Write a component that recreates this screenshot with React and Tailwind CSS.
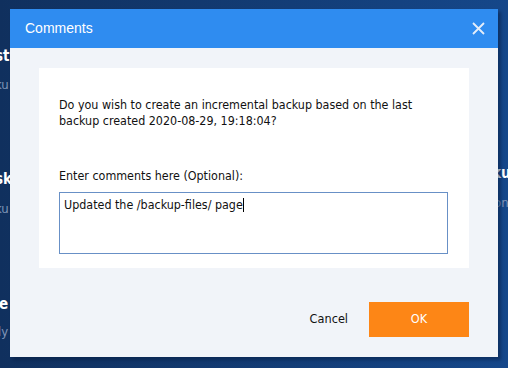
import React from 'react';

const font = { fontFamily: '"DejaVu Sans Condensed", "Liberation Sans", sans-serif' };

const CloseIcon = () => (
    <svg width="13" height="13" viewBox="0 0 13 13" fill="none">
        <path d="M1 1L12 12M12 1L1 12" stroke="#e4edf9" strokeWidth="1.8" />
    </svg>
);

const App = () => {
    return (
        <div
            className="relative w-[508px] h-[368px] overflow-hidden bg-gradient-to-r from-[#10305e] to-[#15478a] font-['Liberation_Sans',sans-serif]"
        >
            {/* page behind the dialog */}
            <div className="flex justify-between h-full" style={font}>
                <div className="flex flex-col w-[40px] pt-[47px] -ml-[5px]">
                    <span className="text-[15px] font-bold text-white leading-[18px]">st</span>
                    <span className="text-[13px] text-[#7f95b8] leading-[16px] mt-[12px]">ku</span>
                    <span className="text-[15px] font-bold text-white leading-[18px] mt-[77px]">sk</span>
                    <span className="text-[13px] text-[#7f95b8] leading-[16px] mt-[13px]">ku</span>
                    <span className="text-[15px] font-bold text-white leading-[18px] mt-[78px] ml-[4px]">e</span>
                    <span className="text-[13px] text-[#7f95b8] leading-[16px] mt-[11px] ml-[3px]">ly</span>
                </div>
                <div className="flex flex-col w-[14px] pt-[164px]">
                    <span className="text-[15px] font-bold text-white leading-[18px] -ml-[2px]">ku</span>
                    <span className="text-[13px] text-[#7f95b8] leading-[16px] mt-[13px]">on</span>
                </div>
            </div>

            {/* dialog */}
            <div className="absolute left-[10px] top-[9px] w-[488px] h-[348px] flex flex-col bg-[#f1f4f9] shadow-[3px_3px_3px_rgba(5,25,60,0.45)]">
                <div className="h-[39px] flex items-center justify-between bg-[#2f8cf0] pl-[15px] pr-[13px]">
                    <span className="text-[14px] text-white">Comments</span>
                    <CloseIcon />
                </div>
                <div className="px-[29px] pt-[20px]">
                    <div className="h-[200px] bg-white px-[20px] pt-[29px] text-[12.4px] leading-[16px] text-[#111]" style={font}>
                        <p>
                            Do you wish to create an incremental backup based on the last
                            <br />
                            backup created 2020-08-29, 19:18:04?
                        </p>
                        <p className="mt-[39px]">Enter comments here (Optional):</p>
                        <div className="mt-[8px] w-[389px] h-[62px] border border-[#6890c6] px-[4px] pt-[4px]">
                            <span>Updated the /backup-files/ page</span>
                            <span className="inline-block w-px h-[14px] bg-black align-[-3px]" />
                        </div>
                    </div>
                </div>
                <div className="flex items-center justify-end gap-[21px] pr-[29px] mt-[34px]" style={font}>
                    <span className="text-[12.6px] text-[#111]">Cancel</span>
                    <button className="w-[100px] h-[35px] bg-[#fd8616] text-white text-[12.6px]">OK</button>
                </div>
            </div>
        </div>
    );
};

export default App;
